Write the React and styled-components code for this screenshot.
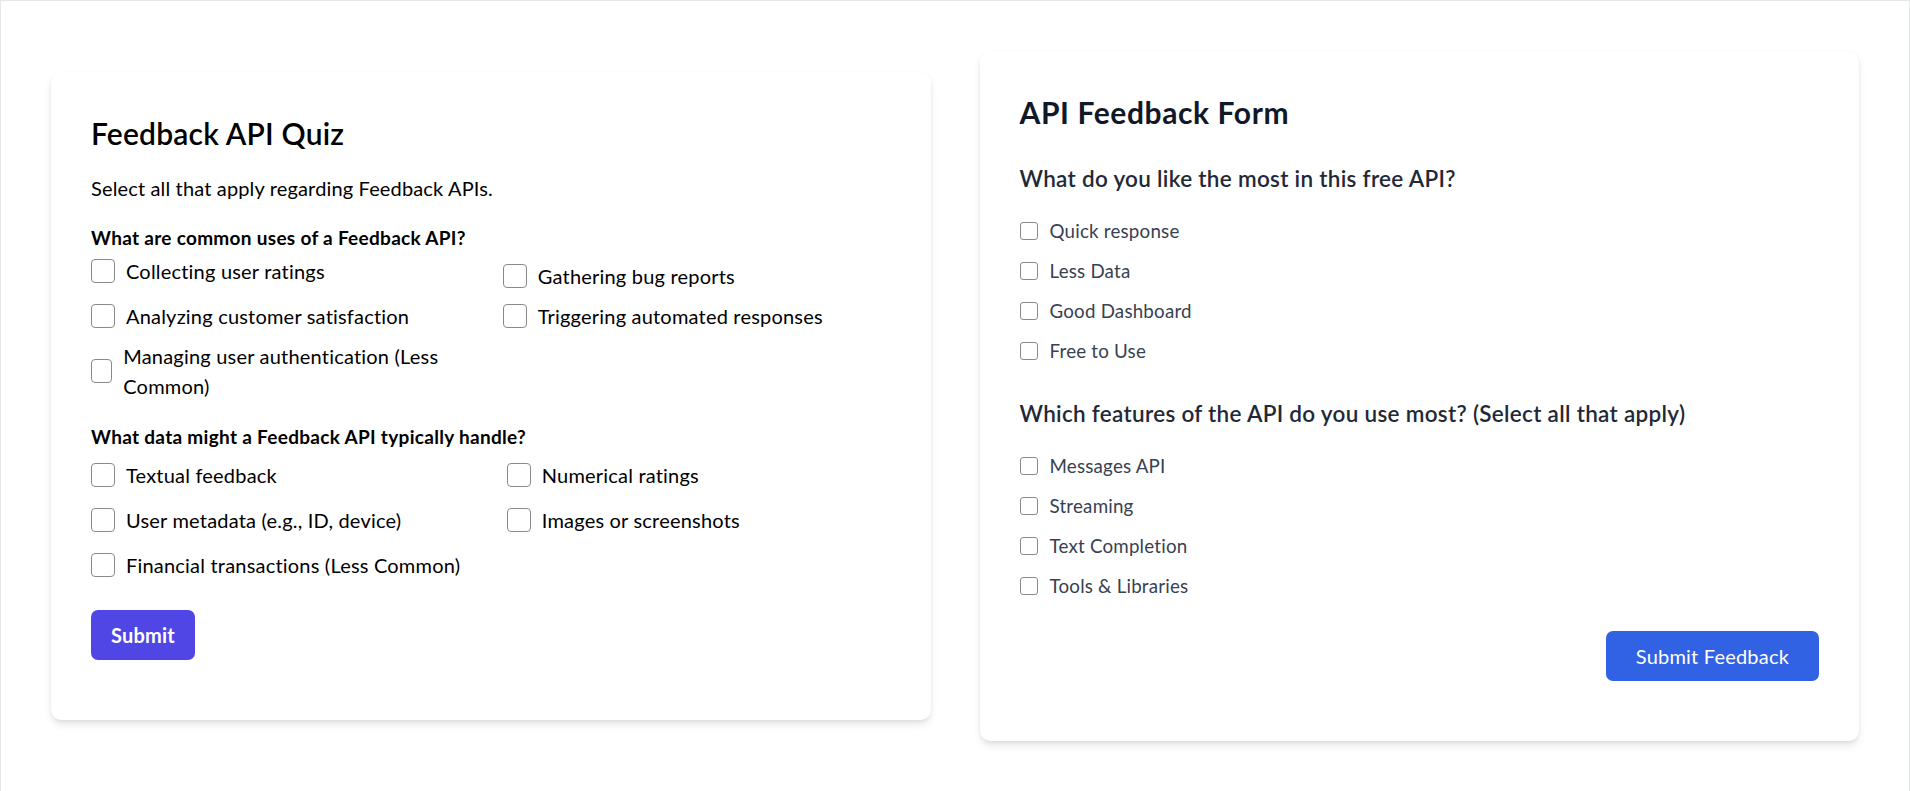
import React from 'react';
import styled, { createGlobalStyle } from 'styled-components';

const GlobalStyle = createGlobalStyle`
  *, *::before, *::after { box-sizing: border-box; }
  html, body { margin: 0; padding: 0; background: #ffffff; }
  body { font-family: Lato, "Noto Sans", sans-serif; color: #000; }
`;

const Page = styled.div`
  min-height: 100vh;
  border: 1px solid #e5e7eb;
  border-bottom: none;
  padding: 50px;
`;

const Row = styled.div`
  display: flex;
  align-items: center;
  gap: 49px;
`;

const Card = styled.section`
  flex: 1 1 0;
  min-width: 0;
  background: #ffffff;
  border-radius: 10px;
  box-shadow: 0 5px 8px -1px rgba(0, 0, 0, 0.1), 0 2px 5px -2px rgba(0, 0, 0, 0.1),
    0 0 2px rgba(0, 0, 0, 0.03);
  padding: 40px 40px 60px;
`;

const Title = styled.h2`
  margin: 0;
  font-size: 30px;
  line-height: 42px;
  font-weight: ${(p) => p.$weight};
  letter-spacing: ${(p) => p.$ls || 0}px;
  color: ${(p) => p.$color};
`;

const Intro = styled.p`
  margin: 19px 0 0;
  font-size: 20px;
  line-height: 30px;
  letter-spacing: 0.15px;
  color: #000;
`;

const Question = styled.h3`
  margin: ${(p) => p.$mt}px 0 0;
  font-size: ${(p) => p.$size}px;
  line-height: ${(p) => p.$lh}px;
  font-weight: ${(p) => p.$weight};
  letter-spacing: 0.3px;
  color: ${(p) => p.$color};
`;

const OptionGrid = styled.div`
  margin-top: 8px;
  display: grid;
  grid-template-columns: 1fr 1fr;
  column-gap: ${(p) => p.$colGap}px;
  row-gap: ${(p) => p.$rowGap}px;
  align-items: start;
`;

const OptionList = styled.div`
  margin-top: 20px;
  display: flex;
  flex-direction: column;
  gap: 10px;
`;

const Option = styled.label`
  display: flex;
  align-items: center;
  gap: ${(p) => p.$gap}px;
  margin-top: ${(p) => p.$shift || 0}px;
  font-size: ${(p) => p.$size}px;
  line-height: 30px;
  letter-spacing: 0.2px;
  color: ${(p) => p.$color};
  cursor: pointer;
`;

const Box = styled.input.attrs({ type: 'checkbox' })`
  appearance: none;
  -webkit-appearance: none;
  margin: 0;
  width: ${(p) => p.$size}px;
  height: ${(p) => p.$size}px;
  border: 1.5px solid #8a8a8a;
  border-radius: ${(p) => (p.$size > 20 ? 4 : 3)}px;
  background: #ffffff;
  flex-shrink: 1;
  cursor: pointer;
  &:checked {
    background: #2563eb;
    border-color: #2563eb;
  }
`;

const ButtonRow = styled.div`
  margin-top: 30px;
  display: flex;
  justify-content: ${(p) => p.$justify};
`;

const Button = styled.button`
  border: none;
  border-radius: 7px;
  padding: 10px ${(p) => p.$px}px;
  font-family: inherit;
  font-size: 20px;
  line-height: 30px;
  font-weight: ${(p) => p.$weight};
  letter-spacing: 0.2px;
  color: #ffffff;
  background: ${(p) => p.$bg};
  cursor: pointer;
`;

const usesCol = [
  { text: 'Collecting user ratings', shift: -5 },
  { text: 'Gathering bug reports' },
  { text: 'Analyzing customer satisfaction' },
  { text: 'Triggering automated responses' },
  { text: 'Managing user authentication (Less Common)' },
];

const dataCol = [
  { text: 'Textual feedback' },
  { text: 'Numerical ratings' },
  { text: 'User metadata (e.g., ID, device)' },
  { text: 'Images or screenshots' },
  { text: 'Financial transactions (Less Common)' },
];

const likes = ['Quick response', 'Less Data', 'Good Dashboard', 'Free to Use'];
const features = ['Messages API', 'Streaming', 'Text Completion', 'Tools & Libraries'];

function QuizOption({ text, shift }) {
  return (
    <Option $gap={11} $size={20} $color="#000" $shift={shift}>
      <Box $size={24} />
      <span>{text}</span>
    </Option>
  );
}

function FormOption({ text }) {
  return (
    <Option $gap={12} $size={18.75} $color="#374151">
      <Box $size={18} />
      <span>{text}</span>
    </Option>
  );
}

export default function App() {
  return (
    <>
      <GlobalStyle />
      <Page>
        <Row>
          <Card>
            <Title $weight={600} $color="#000" $ls={0.2}>Feedback API Quiz</Title>
            <Intro>Select all that apply regarding Feedback APIs.</Intro>
            <Question $mt={20} $size={19} $lh={30} $weight={700} $color="#000">
              What are common uses of a Feedback API?
            </Question>
            <OptionGrid $colGap={24} $rowGap={10}>
              {usesCol.map((o) => (
                <QuizOption key={o.text} text={o.text} shift={o.shift} />
              ))}
            </OptionGrid>
            <Question $mt={21} $size={19} $lh={30} $weight={700} $color="#000">
              What data might a Feedback API typically handle?
            </Question>
            <OptionGrid $colGap={32} $rowGap={15}>
              {dataCol.map((o) => (
                <QuizOption key={o.text} text={o.text} />
              ))}
            </OptionGrid>
            <ButtonRow $justify="flex-start">
              <Button $bg="#4f46e5" $px={20} $weight={700}>Submit</Button>
            </ButtonRow>
          </Card>
          <Card>
            <Title $weight={700} $color="#111827" $ls={0.6}>API Feedback Form</Title>
            <Question $mt={28} $size={22.5} $lh={35} $weight={600} $color="#1f2937">
              What do you like the most in this free API?
            </Question>
            <OptionList>
              {likes.map((t) => (
                <FormOption key={t} text={t} />
              ))}
            </OptionList>
            <Question $mt={30} $size={22.5} $lh={35} $weight={600} $color="#1f2937">
              Which features of the API do you use most? (Select all that apply)
            </Question>
            <OptionList>
              {features.map((t) => (
                <FormOption key={t} text={t} />
              ))}
            </OptionList>
            <ButtonRow $justify="flex-end">
              <Button $bg="#3162e3" $px={30} $weight={400}>Submit Feedback</Button>
            </ButtonRow>
          </Card>
        </Row>
      </Page>
    </>
  );
}
